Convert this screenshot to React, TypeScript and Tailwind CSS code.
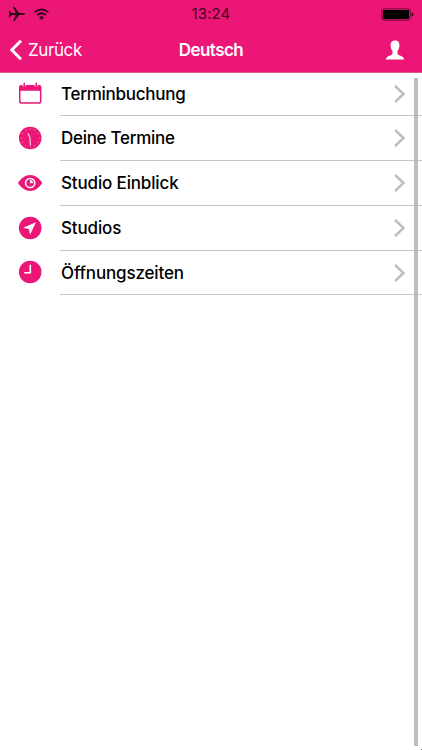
import type { ReactNode } from "react";

const PINK = "#ec1676";

function CalendarIcon() {
  return (
    <svg width="24" height="24" viewBox="0 0 24 24" fill="none">
      <rect x="1" y="3" width="22.400" height="18.800" rx="2" fill={PINK} />
      <rect x="2.500" y="8.700" width="19.400" height="11.600" rx="0.8" fill="#fff" />
      <path d="M6.200 1.500v3M18.200 1.500v3" stroke="#fff" strokeWidth="3.200" />
      <path d="M6.200 1.200v3.400M18.200 1.200v3.400" stroke={PINK} strokeWidth="1.500" strokeLinecap="round" />
    </svg>
  );
}

function DialIcon() {
  return (
    <svg width="24" height="24" viewBox="0 0 24 24" fill="none">
      <circle cx="12.2" cy="12" r="11.3" fill={PINK} />
      {[0, 30, 60, 90, 120, 150, 180, 210, 240, 270, 300, 330].map((a) => (
        <circle key={a} cx="12.2" cy="3" r="0.55" fill="#fff" fillOpacity="0.6" transform={`rotate(${a} 12.2 12)`} />
      ))}
      <path d="M10 7.700l2 3.700.3 7.600" stroke="#fff" strokeOpacity="0.85" strokeWidth="1.1" strokeLinecap="round" strokeLinejoin="round" />
    </svg>
  );
}

function EyeIcon() {
  return (
    <svg width="26" height="24" viewBox="0 0 26 24" fill="none">
      <path d="M.9 12C4.200 7.200 8.400 4 13.200 4S22 7.200 25.300 12C22 16.800 18 20 13.200 20S4.200 16.800.9 12Z" fill={PINK} />
      <circle cx="13.200" cy="12" r="4.600" stroke="#fff" strokeWidth="1.500" />
      <path d="M13.200 12V9.300A2.700 2.700 0 0 1 15.900 12Z" fill="#fff" stroke="#fff" strokeWidth=".5" />
    </svg>
  );
}

function LocationIcon() {
  return (
    <svg width="24" height="24" viewBox="0 0 24 24">
      <circle cx="12.2" cy="12" r="11.3" fill={PINK} />
      <path d="M18 6.300L5.200 11.700L10.800 13L12.100 18.600Z" fill="#fff" />
    </svg>
  );
}

function ClockIcon() {
  return (
    <svg width="24" height="24" viewBox="0 0 24 24" fill="none">
      <circle cx="12.2" cy="12" r="11.3" fill={PINK} />
      <path d="M12.300 4.700V12.800H6.200" stroke="#fff" strokeWidth="1.600" />
    </svg>
  );
}

function Row({ icon, label, size, text }: { icon: ReactNode; label: string; size: string; text: string }) {
  return (
    <li className={`flex ${size}`}>
      <div className="flex w-[60px] shrink-0 items-center justify-center pb-0.5">{icon}</div>
      <div className="flex min-w-0 flex-1 items-center justify-between border-b border-[#c5c5c7] pr-4 pl-px">
        <span className={`text-[17px] font-medium leading-6 text-black ${text}`}>{label}</span>
        <svg width="13" height="20" viewBox="0 0 13 20" fill="none">
          <path d="M2 1.800L10.500 10L2 18.200" stroke="#bdbdbd" strokeWidth="2.500" />
        </svg>
      </div>
    </li>
  );
}

export default function App() {
  return (
    <div className="relative h-[750px] w-[422px] overflow-hidden bg-white font-['Inter','Liberation_Sans',sans-serif]">
      <header className="h-[73px] border-b border-[#df568f] bg-[#ec1676]">
        <div className="grid h-7 grid-cols-3 items-center px-2">
          <div className="flex items-center gap-2">
            <svg width="18" height="16" viewBox="0 0 18 16">
              <path d="M17 8C17 7.300 16 7 15 7H11L6.600 1H5.200L7.600 7H3.600L1.700 4.800H.6L1.500 8L.6 11.200H1.700L3.600 9H7.600L5.200 15H6.600L11 9H15C16 9 17 8.700 17 8Z" fill="#30051a" />
            </svg>
            <svg width="16" height="13" viewBox="0 0 16 13" fill="none" stroke="#30051a">
              <path d="M.7 4.300Q7.500-1.700 14.300 4.300M3.200 7.200Q7.500 3.300 11.800 7.200" strokeWidth="1.700" />
              <path d="M5.100 9.400Q7.500 7.200 9.900 9.400L7.500 11.900Z" fill="#30051a" stroke="none" />
            </svg>
          </div>
          <span className="text-center text-[15px] leading-5 tracking-[0.1px] text-[#3c0820]">13:24</span>
          <svg className="justify-self-end" width="33" height="13" viewBox="0 0 33 13">
            <rect x=".8" y=".9" width="28.400" height="11.200" rx="2" fill="none" stroke="#6b0936" />
            <rect x="2" y="2.100" width="26" height="8.800" rx=".8" fill="#000" />
            <path d="M30.500 4.500Q32.500 5 32.500 6.500T30.500 8.500Z" fill="#30051a" />
          </svg>
        </div>
        <div className="grid h-11 grid-cols-3 items-center px-[9px] text-white">
          <div className="flex items-center gap-[5px]">
            <svg width="14" height="22" viewBox="0 0 14 22" fill="none">
              <path d="M12 1.700L2.800 11L12 20.300" stroke="#fff" strokeWidth="3" />
            </svg>
            <span className="text-[17px] leading-6 tracking-[-0.4px]">Zurück</span>
          </div>
          <span className="text-center text-[17px] font-semibold leading-6 tracking-[-0.55px]">Deutsch</span>
          <svg className="mr-2 justify-self-end" width="20" height="20" viewBox="0 0 20 20">
            <path d="M10 .5C12.900.5 14.600 2.300 14.400 5.200C14.300 8.300 13.500 9.800 12.500 11.100V13.700C13.500 15.700 18.700 15.500 19.200 19.400H.8C1.300 15.500 6.500 15.700 7.500 13.700V11.100C6.500 9.800 5.700 8.300 5.600 5.200C5.400 2.300 7.100.5 10 .5Z" fill="#fff" />
          </svg>
        </div>
      </header>
      <ul>
        <Row icon={<CalendarIcon />} label="Terminbuchung" size="h-[43px]" text="tracking-[-0.27px]" />
        <Row icon={<DialIcon />} label="Deine Termine" size="h-[45px]" text="tracking-[-0.29px]" />
        <Row icon={<EyeIcon />} label="Studio Einblick" size="h-[45px]" text="tracking-[-0.15px]" />
        <Row icon={<LocationIcon />} label="Studios" size="h-[45px]" text="tracking-[-0.15px]" />
        <Row icon={<ClockIcon />} label="Öffnungszeiten" size="h-11" text="tracking-[-0.15px]" />
      </ul>
      <div className="absolute top-[78px] left-[414px] h-[668px] w-1 bg-[#a7a7a7]/75" />
      <div className="absolute right-0 bottom-0 size-px bg-[#777]" />
    </div>
  );
}
